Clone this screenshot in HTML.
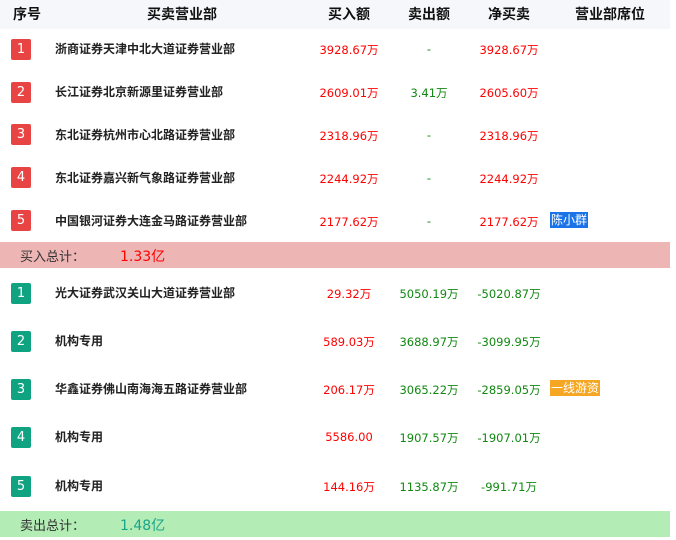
<!DOCTYPE html>
<html><head><meta charset="utf-8"><style>
body{margin:0;width:676px;height:540px;background:#fff;font-family:"DejaVu Sans","Noto Sans CJK SC",sans-serif;position:relative;overflow:hidden}
.a{position:absolute;white-space:nowrap}
.hd{position:absolute;left:0;top:0;width:670px;height:29px;background:#f6f7fb}
.h{font-size:14px;font-weight:bold;color:#111;top:5px;transform:translateX(-50%);font-family:"Noto Sans CJK SC",sans-serif;line-height:18px}
.b{position:absolute;left:11px;width:20px;height:21px;border-radius:2px;color:#fff;font-size:13px;text-align:center;line-height:22px}
.r{background:#e84444}.g{background:#0fa382}
.n{left:55px;font-size:12px;font-weight:bold;color:#222;font-family:"Noto Sans CJK SC",sans-serif;line-height:16px}
.c{font-size:11.5px;transform:translateX(-50%)}
.red{color:#f00}.grn{color:#118811}
.tag{font-size:12px;color:#fff;padding:0 1px;line-height:16px;font-family:"Noto Sans CJK SC",sans-serif}
.t{font-size:13px;color:#333;font-family:"Noto Sans CJK SC",sans-serif}
</style></head><body>
<div class="hd"></div>
<div class="a h" style="left:27px">序号</div>
<div class="a h" style="left:182px">买卖营业部</div>
<div class="a h" style="left:349px">买入额</div>
<div class="a h" style="left:429px">卖出额</div>
<div class="a h" style="left:509px">净买卖</div>
<div class="a h" style="left:610px">营业部席位</div>

<div class="b r" style="top:39px">1</div><div class="a n" style="top:41px">浙商证券天津中北大道证券营业部</div>
<div class="a c red" style="left:349px;top:42px">3928.67万</div><div class="a c grn" style="left:429px;top:42px">-</div><div class="a c red" style="left:509px;top:42px">3928.67万</div>

<div class="b r" style="top:82px">2</div><div class="a n" style="top:84px">长江证券北京新源里证券营业部</div>
<div class="a c red" style="left:349px;top:85px">2609.01万</div><div class="a c grn" style="left:429px;top:85px">3.41万</div><div class="a c red" style="left:509px;top:85px">2605.60万</div>

<div class="b r" style="top:124px">3</div><div class="a n" style="top:127px">东北证券杭州市心北路证券营业部</div>
<div class="a c red" style="left:349px;top:128px">2318.96万</div><div class="a c grn" style="left:429px;top:128px">-</div><div class="a c red" style="left:509px;top:128px">2318.96万</div>

<div class="b r" style="top:167px">4</div><div class="a n" style="top:170px">东北证券嘉兴新气象路证券营业部</div>
<div class="a c red" style="left:349px;top:171px">2244.92万</div><div class="a c grn" style="left:429px;top:171px">-</div><div class="a c red" style="left:509px;top:171px">2244.92万</div>

<div class="b r" style="top:210px">5</div><div class="a n" style="top:213px">中国银河证券大连金马路证券营业部</div>
<div class="a c red" style="left:349px;top:214px">2177.62万</div><div class="a c grn" style="left:429px;top:214px">-</div><div class="a c red" style="left:509px;top:214px">2177.62万</div>
<div class="a tag" style="left:550px;top:212px;background:#1a73e8">陈小群</div>

<div class="a" style="left:0;top:242px;width:670px;height:26px;background:#eeb5b5"></div>
<div class="a t" style="left:20px;top:246px">买入总计：</div>
<div class="a" style="left:120px;top:246px;font-size:14px;color:#f00">1.33亿</div>

<div class="b g" style="top:283px">1</div><div class="a n" style="top:285px">光大证券武汉关山大道证券营业部</div>
<div class="a c red" style="left:349px;top:286px">29.32万</div><div class="a c grn" style="left:429px;top:286px">5050.19万</div><div class="a c grn" style="left:509px;top:286px">-5020.87万</div>

<div class="b g" style="top:331px">2</div><div class="a n" style="top:333px">机构专用</div>
<div class="a c red" style="left:349px;top:334px">589.03万</div><div class="a c grn" style="left:429px;top:334px">3688.97万</div><div class="a c grn" style="left:509px;top:334px">-3099.95万</div>

<div class="b g" style="top:379px">3</div><div class="a n" style="top:381px">华鑫证券佛山南海海五路证券营业部</div>
<div class="a c red" style="left:349px;top:382px">206.17万</div><div class="a c grn" style="left:429px;top:382px">3065.22万</div><div class="a c grn" style="left:509px;top:382px">-2859.05万</div>
<div class="a tag" style="left:550px;top:380px;background:#f5a623">一线游资</div>

<div class="b g" style="top:427px">4</div><div class="a n" style="top:429px">机构专用</div>
<div class="a c red" style="left:349px;top:430px">5586.00</div><div class="a c grn" style="left:429px;top:430px">1907.57万</div><div class="a c grn" style="left:509px;top:430px">-1907.01万</div>

<div class="b g" style="top:476px">5</div><div class="a n" style="top:478px">机构专用</div>
<div class="a c red" style="left:349px;top:479px">144.16万</div><div class="a c grn" style="left:429px;top:479px">1135.87万</div><div class="a c grn" style="left:509px;top:479px">-991.71万</div>

<div class="a" style="left:0;top:511px;width:670px;height:26px;background:#b3ecb5"></div>
<div class="a t" style="left:20px;top:515px">卖出总计：</div>
<div class="a" style="left:120px;top:515px;font-size:14px;color:#1aa58a">1.48亿</div>
</body></html>
